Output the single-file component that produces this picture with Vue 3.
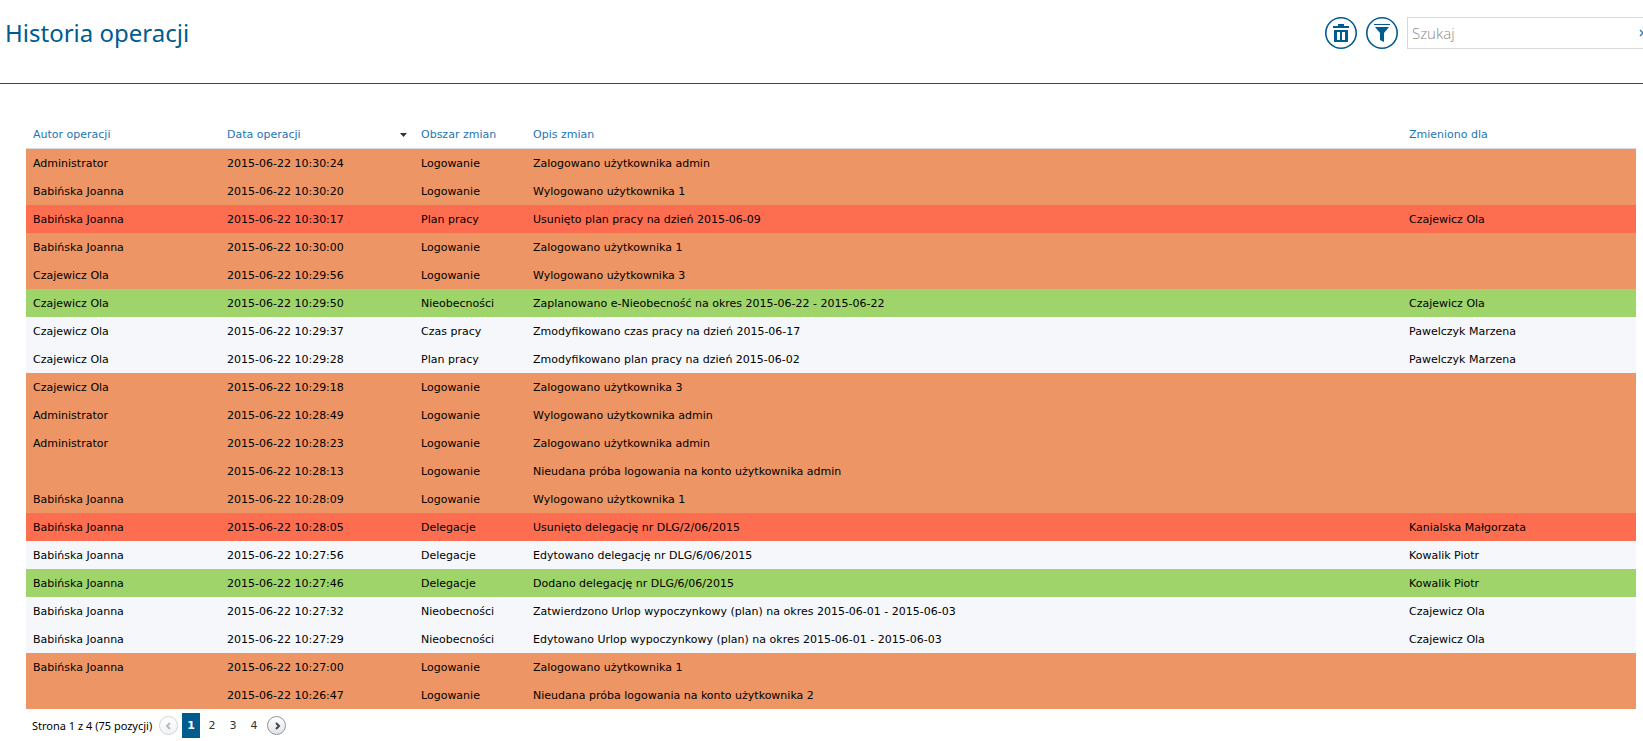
<script setup>
import { ref } from 'vue'

const search = ref('')
const pages = [1, 2, 3, 4]
const current = ref(1)

const BJ = 'Babińska Joanna'
const CO = 'Czajewicz Ola'
const AD = 'Administrator'
const rows = [
  ['login', AD, '10:30:24', 'Logowanie', 'Zalogowano użytkownika admin', ''],
  ['login', BJ, '10:30:20', 'Logowanie', 'Wylogowano użytkownika 1', ''],
  ['removed', BJ, '10:30:17', 'Plan pracy', 'Usunięto plan pracy na dzień 2015-06-09', CO],
  ['login', BJ, '10:30:00', 'Logowanie', 'Zalogowano użytkownika 1', ''],
  ['login', CO, '10:29:56', 'Logowanie', 'Wylogowano użytkownika 3', ''],
  ['added', CO, '10:29:50', 'Nieobecności', 'Zaplanowano e-Nieobecność na okres 2015-06-22 - 2015-06-22', CO],
  ['edited', CO, '10:29:37', 'Czas pracy', 'Zmodyfikowano czas pracy na dzień 2015-06-17', 'Pawelczyk Marzena'],
  ['edited', CO, '10:29:28', 'Plan pracy', 'Zmodyfikowano plan pracy na dzień 2015-06-02', 'Pawelczyk Marzena'],
  ['login', CO, '10:29:18', 'Logowanie', 'Zalogowano użytkownika 3', ''],
  ['login', AD, '10:28:49', 'Logowanie', 'Wylogowano użytkownika admin', ''],
  ['login', AD, '10:28:23', 'Logowanie', 'Zalogowano użytkownika admin', ''],
  ['login', '', '10:28:13', 'Logowanie', 'Nieudana próba logowania na konto użytkownika admin', ''],
  ['login', BJ, '10:28:09', 'Logowanie', 'Wylogowano użytkownika 1', ''],
  ['removed', BJ, '10:28:05', 'Delegacje', 'Usunięto delegację nr DLG/2/06/2015', 'Kanialska Małgorzata'],
  ['edited', BJ, '10:27:56', 'Delegacje', 'Edytowano delegację nr DLG/6/06/2015', 'Kowalik Piotr'],
  ['added', BJ, '10:27:46', 'Delegacje', 'Dodano delegację nr DLG/6/06/2015', 'Kowalik Piotr'],
  ['edited', BJ, '10:27:32', 'Nieobecności', 'Zatwierdzono Urlop wypoczynkowy (plan) na okres 2015-06-01 - 2015-06-03', CO],
  ['edited', BJ, '10:27:29', 'Nieobecności', 'Edytowano Urlop wypoczynkowy (plan) na okres 2015-06-01 - 2015-06-03', CO],
  ['login', BJ, '10:27:00', 'Logowanie', 'Zalogowano użytkownika 1', ''],
  ['login', '', '10:26:47', 'Logowanie', 'Nieudana próba logowania na konto użytkownika 2', '']
].map(([kind, author, time, area, text, target]) => ({
  kind, author, date: `2015-06-22 ${time}`, area, text, target
}))
</script>

<template>
  <div class="page">
    <header class="top">
      <h1>Historia operacji</h1>
      <div class="tools">
        <button type="button" class="round" aria-label="Usuń">
          <svg width="32" height="32" viewBox="0 0 32 32">
            <circle cx="16" cy="16" r="15.200" fill="none" stroke="#005b8f" stroke-width="1.600" />
            <path fill="#005b8f" fill-rule="evenodd" d="M13 7h6v2h5v2H8V9h5zM9 13h14v12H9zM12 15v8h3v-8zM17 15v8h3v-8z" />
          </svg>
        </button>
        <button type="button" class="round" aria-label="Filtruj">
          <svg width="32" height="32" viewBox="0 0 32 32">
            <circle cx="16" cy="16" r="15.200" fill="none" stroke="#005b8f" stroke-width="1.600" />
            <path fill="#005b8f" d="M8 7h16v1H8zM9 10h14l-5 6v9l-4-2v-7z" />
          </svg>
        </button>
        <div class="search">
          <input v-model="search" type="text" placeholder="Szukaj" aria-label="Szukaj" />
          <button type="button" class="clear" aria-label="Wyczyść" @click="search = ''">
            <svg width="8" height="8" viewBox="0 0 8 8">
              <path d="M1 1l6 6M7 1L1 7" stroke="#2a7fc0" stroke-width="1.500" />
            </svg>
          </button>
        </div>
      </div>
    </header>

    <main>
      <table>
        <colgroup>
          <col class="c-author" /><col class="c-date" /><col class="c-area" /><col /><col class="c-target" />
        </colgroup>
        <thead>
          <tr>
            <th scope="col">Autor operacji</th>
            <th scope="col" aria-sort="descending">
              <div class="sorted">
                <span>Data operacji</span>
                <svg width="7" height="4" viewBox="0 0 7 4"><path d="M0 0h7L3.500 4z" fill="#333" /></svg>
              </div>
            </th>
            <th scope="col">Obszar zmian</th>
            <th scope="col">Opis zmian</th>
            <th scope="col">Zmieniono dla</th>
          </tr>
        </thead>
        <tbody>
          <tr v-for="row in rows" :key="row.date" :class="row.kind">
            <td>{{ row.author }}</td>
            <td>{{ row.date }}</td>
            <td>{{ row.area }}</td>
            <td>{{ row.text }}</td>
            <td>{{ row.target }}</td>
          </tr>
        </tbody>
      </table>

      <nav class="pager" aria-label="Strony">
        <span class="summary">Strona 1 z 4 (75 pozycji)</span>
        <button type="button" class="step" disabled aria-label="Poprzednia">
          <svg width="8" height="8" viewBox="0 0 8 8"><path d="M5 1L2 4l3 3" fill="none" stroke="#555" stroke-width="2" /></svg>
        </button>
        <div class="pages">
          <button
            v-for="page in pages"
            :key="page"
            type="button"
            class="page-number"
            :class="{ active: page === current }"
            @click="current = page"
          >{{ page }}</button>
        </div>
        <button type="button" class="step" aria-label="Następna">
          <svg width="8" height="8" viewBox="0 0 8 8"><path d="M3 1l3 3-3 3" fill="none" stroke="#444" stroke-width="2" /></svg>
        </button>
      </nav>
    </main>
  </div>
</template>

<style>
body {
  margin: 0;
  background: #fff;
}
</style>

<style scoped>
.page {
  overflow: hidden;
  color: #000;
  font: 11px/14px Verdana, "DejaVu Sans", sans-serif;
}

button {
  padding: 0;
  border: 0;
  background: none;
  font: inherit;
  color: inherit;
  cursor: pointer;
}

svg {
  display: block;
}

.top {
  display: flex;
  justify-content: space-between;
  align-items: flex-start;
  height: 83px;
  border-bottom: 1px solid #005b8f;
}

h1 {
  margin: 15px 0 0 5px;
  color: #005b8f;
  font: 400 24px/36px "Noto Sans", sans-serif;
}

.tools {
  display: flex;
  gap: 9px;
  margin: 17px -12px 0 0;
}

.round {
  width: 32px;
  height: 32px;
}

.search {
  display: flex;
  align-items: center;
  box-sizing: border-box;
  width: 248px;
  height: 32px;
  padding: 0 7px 0 4px;
  border: 1px solid #d9d9d9;
}

.search input {
  flex: 1;
  min-width: 0;
  padding: 0;
  border: 0;
  outline: 0;
  background: none;
  color: #333;
  font: 300 15px/24px "Open Sans", sans-serif;
}

.search input::placeholder {
  color: #888;
  opacity: 1;
}

main {
  padding: 36px 7px 0 26px;
}

table {
  width: 100%;
  border-collapse: separate;
  border-spacing: 0;
  table-layout: fixed;
}

.c-author,
.c-date {
  width: 194px;
}

.c-area {
  width: 112px;
}

.c-target {
  width: 234px;
}

th,
td {
  box-sizing: border-box;
  height: 28px;
  padding: 1px 7px 0;
  text-align: left;
  font-weight: 400;
  white-space: nowrap;
}

th {
  height: 29px;
  color: #1c75b5;
  border-bottom: 1px solid #d9d9d9;
}

.sorted {
  display: flex;
  justify-content: space-between;
  align-items: center;
}

.login {
  background: #ed9564;
}

.removed {
  background: #fd6e51;
}

.added {
  background: #9fd46a;
}

.edited {
  background: #f5f7fb;
}

.pager {
  display: flex;
  align-items: center;
  padding: 4px 6px 2px;
}

.summary {
  width: 127px;
  font: 11px/24px "Noto Sans", sans-serif;
}

.step {
  display: grid;
  place-items: center;
  box-sizing: border-box;
  width: 19px;
  height: 19px;
  border: 1px solid #8f949c;
  border-radius: 50%;
  background: linear-gradient(#fff, #dfe3ea);
}

.step:disabled {
  opacity: 0.4;
}

.pages {
  display: flex;
  gap: 3px;
  margin: 0 4px;
}

.page-number {
  width: 18px;
  height: 25px;
  color: #333;
}

.page-number.active {
  background: #005b8f;
  color: #fff;
  font-weight: 700;
}
</style>
